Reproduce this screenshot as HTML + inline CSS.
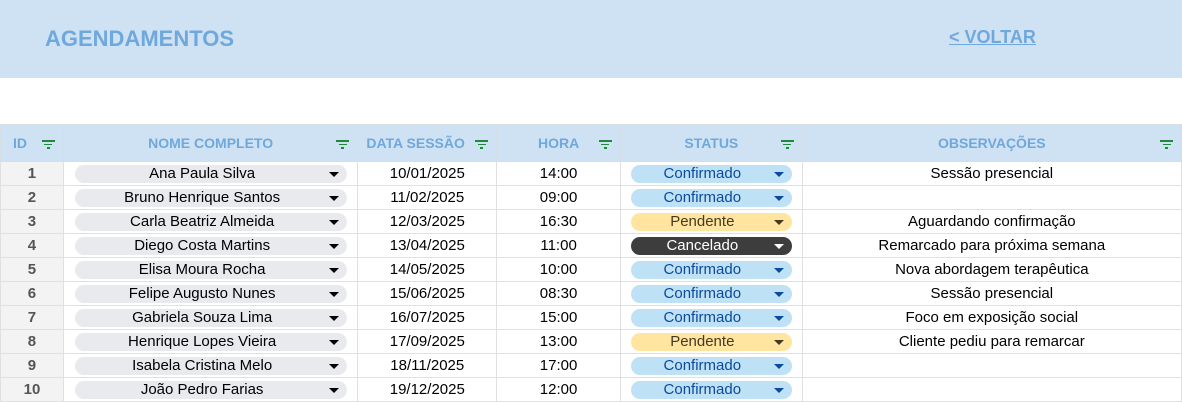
<!DOCTYPE html>
<html><head><meta charset="utf-8"><style>
*{margin:0;padding:0;box-sizing:border-box}
body{width:1182px;height:402px;overflow:hidden;background:#fff;font-family:"Liberation Sans",sans-serif;position:relative}
.hdr{position:absolute;left:0;top:0;width:1182px;height:78px;background:#cfe2f3}
.t{position:absolute;left:45px;top:26px;font-size:22px;font-weight:bold;color:#6fa8dc}
.v{position:absolute;left:949px;top:27px;font-size:18px;font-weight:bold;color:#6fa8dc;text-decoration:underline}
table{position:absolute;left:0;top:124px;border-collapse:collapse;table-layout:fixed;border-top:1px solid #1e8a3a}
td,th{border:1px solid #e0e0e0;font-size:15px;text-align:center;height:24px;padding:0;position:relative;color:#000}
th{height:37px;background:#cfe2f3;color:#6fa8dc;font-size:14px;font-weight:bold;border-color:#d6dde4}
td.id{background:#f3f3f3;color:#555;font-weight:bold}
.f{position:absolute;right:8px;top:15px;width:13px}
.f i{display:block;height:1.5px;background:#1e8a3a;margin:0 auto 2px}
.chip{position:absolute;top:3px;height:18px;border-radius:9px;line-height:18px;text-align:center}
.chip:after{content:"";position:absolute;right:8px;top:7px;border-left:5px solid transparent;border-right:5px solid transparent;border-top:5px solid #000}
.n{left:11px;right:10px;background:#e8eaed;padding-right:18px}
.s{left:10px;right:10px;padding-right:18px}
.c{background:#bfe1f6;color:#0b4a9c}.c:after{border-top-color:#0b4a9c}
.p{background:#ffe5a0;color:#473821}.p:after{border-top-color:#473821}
.x{background:#3d3d3d;color:#fff}.x:after{border-top-color:#fff}
</style></head><body>
<div class="hdr"><div class="t">AGENDAMENTOS</div><div class="v">&lt; VOLTAR</div></div>
<table>
<colgroup><col style="width:63px"><col style="width:295px"><col style="width:139px"><col style="width:124px"><col style="width:182px"><col style="width:380px"></colgroup>
<tr><th style="text-align:left;padding-left:12px">ID<span class="f"><i style="width:13px"></i><i style="width:8px"></i><i style="width:3px"></i></span></th><th>NOME COMPLETO<span class="f"><i style="width:13px"></i><i style="width:8px"></i><i style="width:3px"></i></span></th><th style="text-align:left;padding-left:8px">DATA SESSÃO<span class="f"><i style="width:13px"></i><i style="width:8px"></i><i style="width:3px"></i></span></th><th>HORA<span class="f"><i style="width:13px"></i><i style="width:8px"></i><i style="width:3px"></i></span></th><th>STATUS<span class="f"><i style="width:13px"></i><i style="width:8px"></i><i style="width:3px"></i></span></th><th>OBSERVAÇÕES<span class="f"><i style="width:13px"></i><i style="width:8px"></i><i style="width:3px"></i></span></th></tr>
<tr><td class="id">1</td><td><div class="chip n">Ana Paula Silva</div></td><td>10/01/2025</td><td>14:00</td><td><div class="chip s c">Confirmado</div></td><td>Sessão presencial</td></tr>
<tr><td class="id">2</td><td><div class="chip n">Bruno Henrique Santos</div></td><td>11/02/2025</td><td>09:00</td><td><div class="chip s c">Confirmado</div></td><td></td></tr>
<tr><td class="id">3</td><td><div class="chip n">Carla Beatriz Almeida</div></td><td>12/03/2025</td><td>16:30</td><td><div class="chip s p">Pendente</div></td><td>Aguardando confirmação</td></tr>
<tr><td class="id">4</td><td><div class="chip n">Diego Costa Martins</div></td><td>13/04/2025</td><td>11:00</td><td><div class="chip s x">Cancelado</div></td><td>Remarcado para próxima semana</td></tr>
<tr><td class="id">5</td><td><div class="chip n">Elisa Moura Rocha</div></td><td>14/05/2025</td><td>10:00</td><td><div class="chip s c">Confirmado</div></td><td>Nova abordagem terapêutica</td></tr>
<tr><td class="id">6</td><td><div class="chip n">Felipe Augusto Nunes</div></td><td>15/06/2025</td><td>08:30</td><td><div class="chip s c">Confirmado</div></td><td>Sessão presencial</td></tr>
<tr><td class="id">7</td><td><div class="chip n">Gabriela Souza Lima</div></td><td>16/07/2025</td><td>15:00</td><td><div class="chip s c">Confirmado</div></td><td>Foco em exposição social</td></tr>
<tr><td class="id">8</td><td><div class="chip n">Henrique Lopes Vieira</div></td><td>17/09/2025</td><td>13:00</td><td><div class="chip s p">Pendente</div></td><td>Cliente pediu para remarcar</td></tr>
<tr><td class="id">9</td><td><div class="chip n">Isabela Cristina Melo</div></td><td>18/11/2025</td><td>17:00</td><td><div class="chip s c">Confirmado</div></td><td></td></tr>
<tr><td class="id">10</td><td><div class="chip n">João Pedro Farias</div></td><td>19/12/2025</td><td>12:00</td><td><div class="chip s c">Confirmado</div></td><td></td></tr>
</table>
</body></html>
